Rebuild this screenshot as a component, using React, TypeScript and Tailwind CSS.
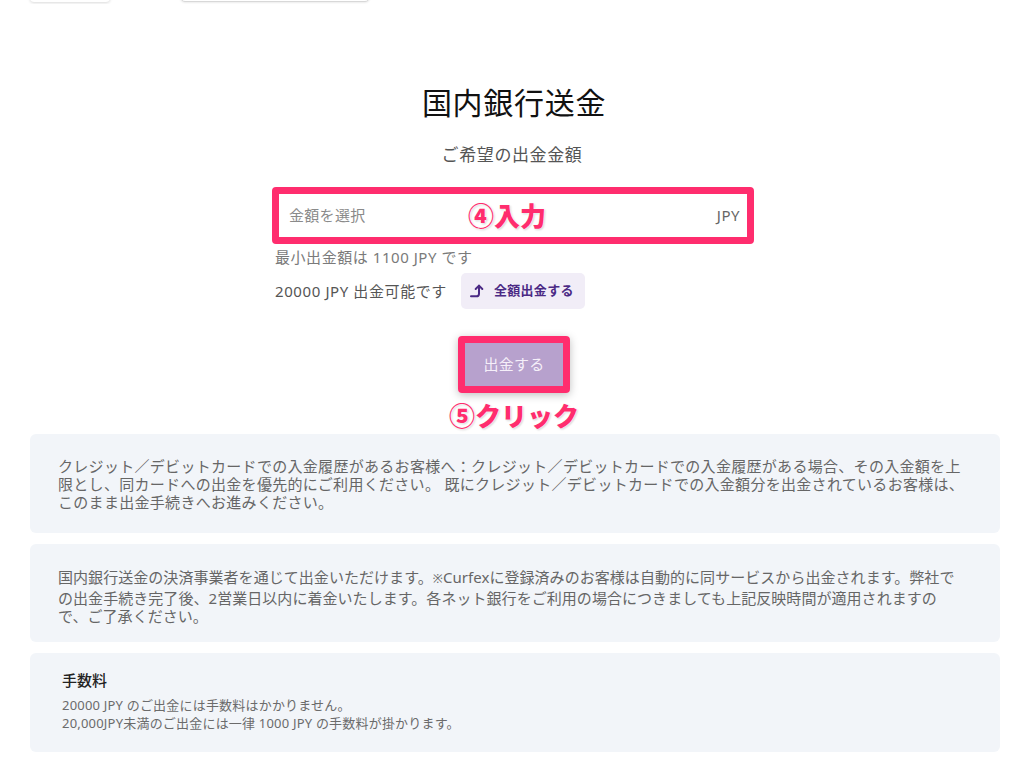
import React from "react";

const font = { fontFamily: '"Noto Sans", "Noto Sans CJK JP", sans-serif' };

function CornerUp() {
  return (
    <svg width="16" height="16" viewBox="0 0 24 24" fill="none" stroke="#4b2a85" strokeWidth="3" strokeLinecap="round" strokeLinejoin="round">
      <polyline points="10 9 15 4 20 9" />
      <path d="M3 20h8a4 4 0 0 0 4-4V4" />
    </svg>
  );
}

export default function App() {
  return (
    <div className="min-h-[775px] w-[1024px] bg-white font-['Noto_Sans','Noto_Sans_CJK_JP',sans-serif]" style={font}>
      {/* cut-off top elements */}
      <div className="flex h-[4px] overflow-hidden">
        <div className="ml-[30px] -mt-[36px] h-[38px] w-[80px] rounded-[4px] bg-white shadow-[0_1px_3px_rgba(0,0,0,0.15)]" />
        <div className="ml-[70px] -mt-[36px] h-[38px] w-[190px] rounded-[5px] border border-[#d8d8d8] bg-white shadow-[0_1px_2px_rgba(0,0,0,0.08)]" />
      </div>

      <div className="flex flex-col items-center">
        <h1 className="mt-[79px] ml-[4px] text-[30px] leading-[40px] tracking-[0.7px] text-[#111] font-normal">国内銀行送金</h1>
        <p className="mt-[20px] text-[17px] leading-[24px] tracking-[0.6px] text-[#555]">ご希望の出金金額</p>

        <div className="ml-[2px] mt-[20px] w-[482px]">
          <div className="relative h-[57px] w-[482px] rounded-[4px] border-[7px] border-[#ff2d6e] bg-white">
            <div className="flex h-full items-center justify-between pl-[10px] pr-[7px]">
              <span className="text-[15px] tracking-[0.3px] text-[#8a8a8a]">金額を選択</span>
              <span className="text-[15px] tracking-[0.5px] text-[#666]">JPY</span>
            </div>
            <span className="absolute left-[189px] top-[7px] text-[26px] leading-[30px] font-black text-[#ff2d6e] [text-shadow:0_0_2px_#fff,0_0_3px_#fff,1px_1px_2px_rgba(0,0,0,0.25)]">④入力</span>
          </div>
          <p className="ml-[3px] mt-[3px] text-[15px] leading-[20px] tracking-[0.55px] text-[#7a7a7a]">最小出金額は 1100 JPY です</p>
          <div className="ml-[3px] mt-[6px] flex items-center gap-[14px]">
            <span className="text-[15px] leading-[20px] tracking-[0.6px] text-[#555]">20000 JPY 出金可能です</span>
            <button className="flex h-[36px] items-center gap-[9px] rounded-[5px] bg-[#f1edf7] pl-[8px] pr-[11px] text-[13px] font-bold tracking-[0.3px] text-[#4b2a85]">
              <CornerUp />
              全額出金する
            </button>
          </div>
        </div>

        <div className="ml-[4px] mt-[27px] rounded-[4px] border-[7px] border-[#ff2d6e] shadow-[0_2px_8px_rgba(0,0,0,0.25)]">
          <button className="flex h-[43px] w-[98px] items-center justify-center bg-[#b7a1cd] text-[15px] tracking-[0.3px] text-[#f5eff9]">出金する</button>
        </div>
        <div className="ml-[4px] mt-[8px] text-[26px] leading-[30px] font-black text-[#ff2d6e] [text-shadow:0_0_2px_#fff,0_0_3px_#fff,1px_1px_2px_rgba(0,0,0,0.25)]">⑤クリック</div>
      </div>

      <div className="ml-[30px] mt-[3px] flex w-[970px] flex-col gap-[11px]">
        <div className="h-[99px] whitespace-nowrap rounded-[6px] bg-[#f2f5f9] pl-[28px] pr-[10px] pt-[23px] text-[15px] leading-[18px] tracking-[0.3px] text-[#666]">
          <div>クレジット／デビットカードでの入金履歴があるお客様へ：クレジット／デビットカードでの入金履歴がある場合、その入金額を上</div>
          <div>限とし、同カードへの出金を優先的にご利用ください。 既にクレジット／デビットカードでの入金額分を出金されているお客様は、</div>
          <div>このまま出金手続きへお進みください。</div>
        </div>
        <div className="h-[98px] whitespace-nowrap rounded-[6px] bg-[#f2f5f9] pl-[28px] pr-[10px] pt-[24px] text-[15px] leading-[18.5px] tracking-[0.05px] text-[#666]">
          <div>
            国内銀行送金の決済事業者を通じて出金いただけます。<span className="text-[12px]">※</span>Curfexに登録済みのお客様は自動的に同サービスから出金されます。弊社で
          </div>
          <div>の出金手続き完了後、2営業日以内に着金いたします。各ネット銀行をご利用の場合につきましても上記反映時間が適用されますの</div>
          <div>で、ご了承ください。</div>
        </div>
        <div className="h-[99px] rounded-[6px] bg-[#f2f5f9] px-[32px] pt-[17px]">
          <div className="text-[15px] leading-[20px] font-medium text-[#222]">手数料</div>
          <div className="mt-[6px] text-[13px] leading-[18px] tracking-[0.2px] text-[#6b6b6b]">
            <div>20000 JPY のご出金には手数料はかかりません。</div>
            <div>20,000JPY未満のご出金には一律 1000 JPY の手数料が掛かります。</div>
          </div>
        </div>
      </div>
    </div>
  );
}
